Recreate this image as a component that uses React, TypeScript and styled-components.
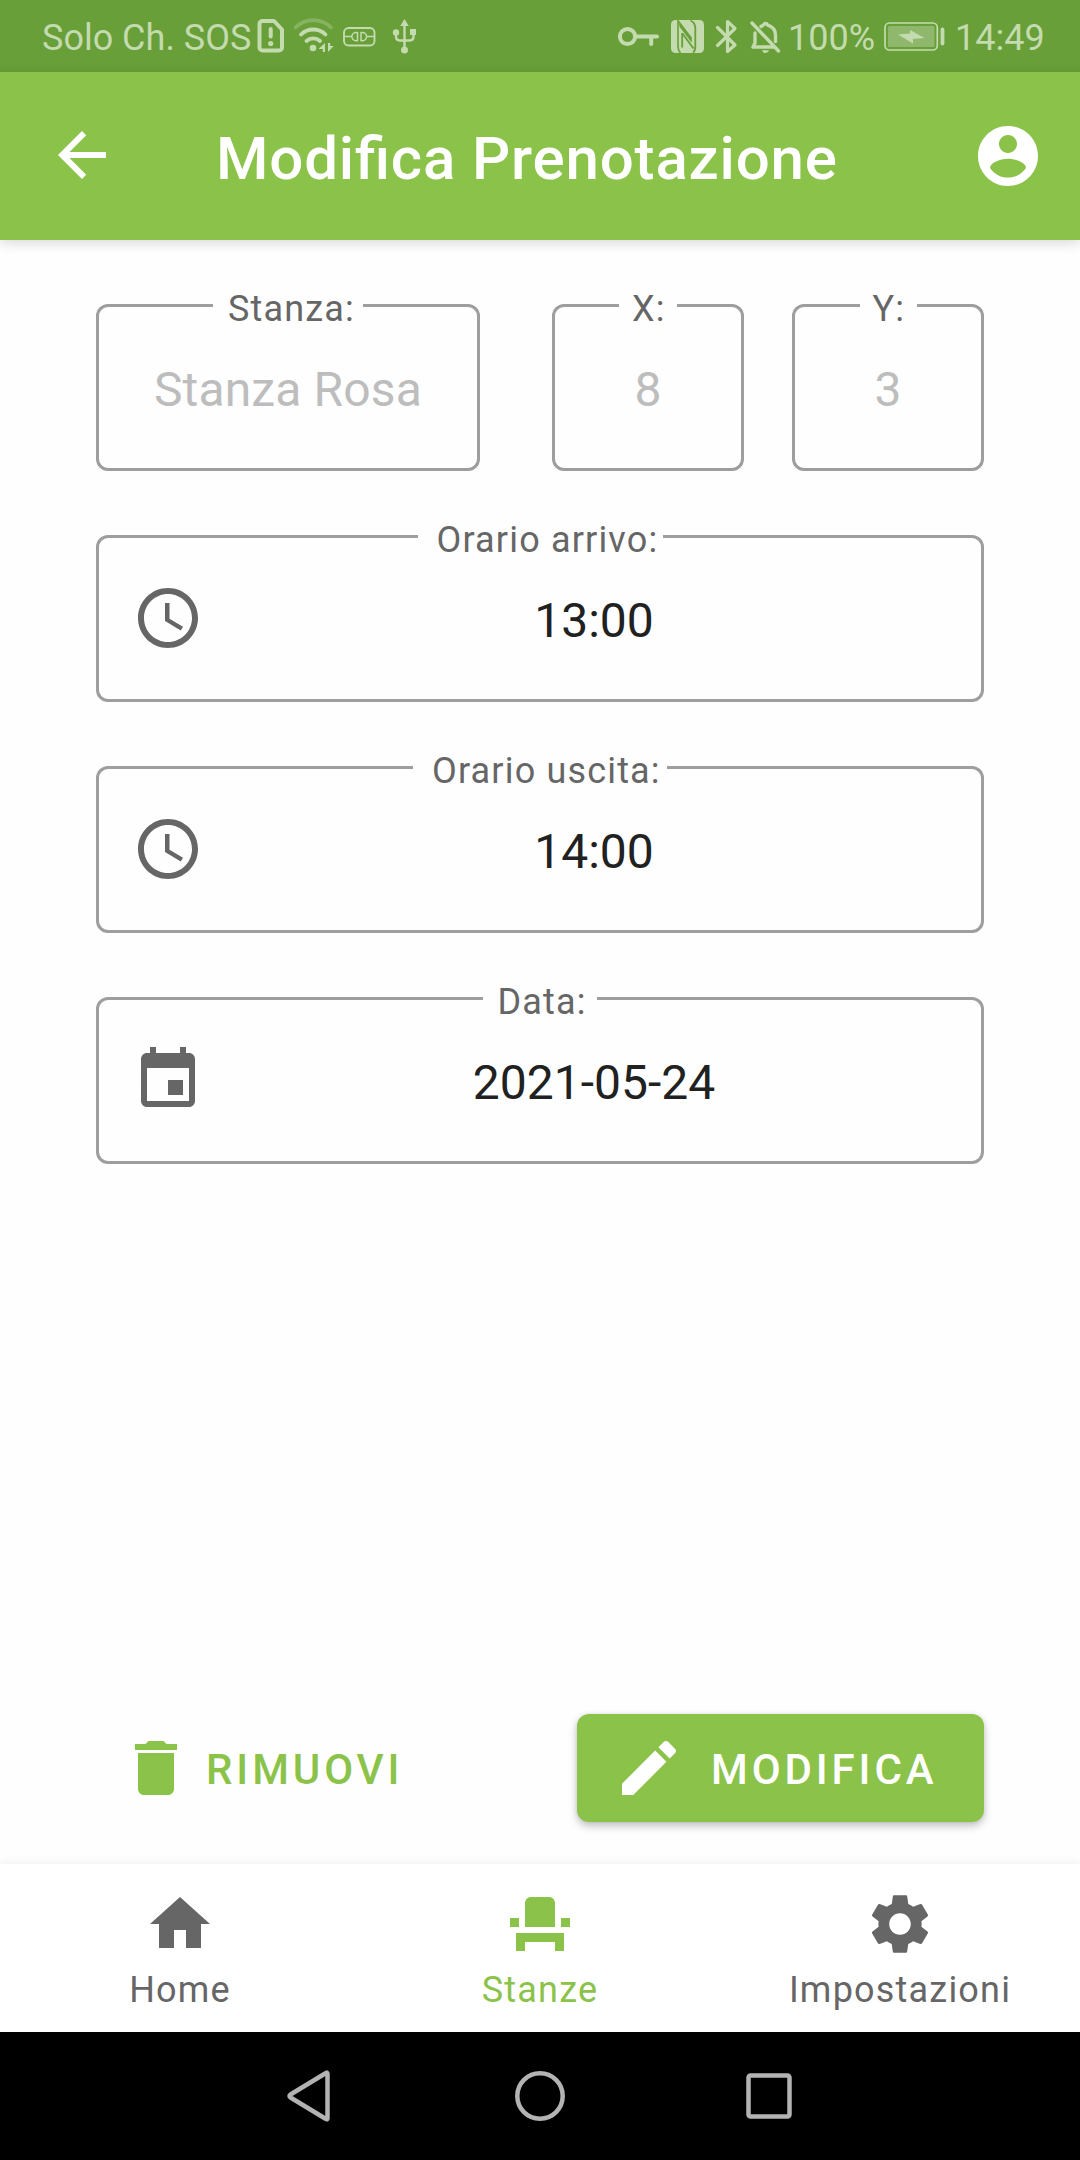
import React from "react";
import styled, { createGlobalStyle } from "styled-components";

const green = "#8bc34a";
const greenDark = "#689f38";
const grey = "#666666";
const statusInk = "#c3dbaf";

const GlobalStyle = createGlobalStyle`
  html, body { margin: 0; padding: 0; background: #fefefe; }
  *, *::before, *::after { box-sizing: border-box; }
  svg { display: block; flex: none; }
`;

const Screen = styled.div`
  width: 1080px;
  height: 2160px;
  display: flex;
  flex-direction: column;
  overflow: hidden;
  background: #fefefe;
  font-family: Roboto, "Noto Sans", sans-serif;
`;

const StatusBar = styled.div`
  display: flex;
  flex: none;
  height: 72px;
  background: ${greenDark};
  color: ${statusInk};
`;

const StatusText = styled.span<{ $width: number; $inset: number }>`
  flex: none;
  width: ${(p) => p.$width}px;
  padding-left: ${(p) => p.$inset}px;
  font-size: 36px;
  line-height: 77px;
  white-space: nowrap;
`;

const StatusSpacer = styled.div`
  flex: 1;
`;

const Header = styled.header`
  display: flex;
  flex: none;
  align-items: center;
  height: 168px;
  padding: 0 36px 0 46px;
  background: ${green};
  color: #fff;
  box-shadow: 0 3px 12px rgba(0, 0, 0, 0.15);
`;

const BackButton = styled.div`
  padding-bottom: 2px;
`;

const Title = styled.h1`
  flex: 1;
  margin: 0;
  padding: 5px 0 0 98px;
  font-size: 60px;
  line-height: 70px;
  font-weight: 500;
  letter-spacing: 0.83px;
  font-feature-settings: "liga" 1;
  white-space: nowrap;
`;

const Form = styled.main`
  display: flex;
  flex: 1;
  flex-direction: column;
  gap: 64px;
  padding: 64px 96px 0;
`;

const SeatCoordinates = styled.div`
  display: flex;
  gap: 48px;
`;

const TopRow = styled.div`
  display: flex;
  justify-content: space-between;
`;

const Field = styled.div<{ $width?: number }>`
  position: relative;
  display: flex;
  align-items: center;
  width: ${(p) => (p.$width ? `${p.$width}px` : "100%")};
  height: 167px;
  padding: 0 0 1px ${(p) => (p.$width ? 0 : 33)}px;
  border: 3px solid #9e9e9e;
  border-radius: 12px;
`;

const FieldLabel = styled.span<{ $notch: number; $inset: number }>`
  position: absolute;
  top: -18px;
  left: 50%;
  width: ${(p) => p.$notch}px;
  margin-left: ${(p) => -p.$notch / 2}px;
  padding-left: ${(p) => p.$inset}px;
  background: #fefefe;
  color: ${grey};
  font-size: 36px;
  line-height: 40px;
  letter-spacing: 1.17px;
  white-space: nowrap;
`;

const FieldValue = styled.span<{ $muted?: boolean }>`
  flex: 1;
  padding: 6px 0 0 ${(p) => (p.$muted ? 0 : 3)}px;
  color: ${(p) => (p.$muted ? "#bdbdbd" : "#212121")};
  font-size: 48px;
  line-height: 56px;
  letter-spacing: ${(p) => (p.$muted ? 0.15 : 0)}px;
  text-align: center;
  white-space: nowrap;
`;

const Actions = styled.div`
  display: flex;
  flex: none;
  justify-content: space-between;
  height: 150px;
  padding: 0 96px;
`;

const ActionButton = styled.button<{ $filled?: boolean }>`
  display: flex;
  align-items: center;
  width: ${(p) => (p.$filled ? 407 : 330)}px;
  height: 108px;
  padding: 0 0 0 ${(p) => (p.$filled ? 36 : 24)}px;
  gap: ${(p) => (p.$filled ? 26 : 14)}px;
  border: 0;
  border-radius: 12px;
  background: ${(p) => (p.$filled ? green : "transparent")};
  color: ${(p) => (p.$filled ? "#fff" : green)};
  box-shadow: ${(p) => (p.$filled ? "0 4px 8px rgba(0, 0, 0, 0.24), 0 0 4px rgba(0, 0, 0, 0.08)" : "none")};
  font-family: inherit;
  font-size: 42px;
  line-height: 50px;
  font-weight: 500;
  letter-spacing: 3.9px;
  text-transform: uppercase;
`;

const ActionLabel = styled.span`
  padding-top: 3px;
  white-space: nowrap;
`;

const BottomNav = styled.nav`
  display: grid;
  flex: none;
  grid-template-columns: repeat(3, 1fr);
  height: 168px;
  background: #fff;
  box-shadow: 0 0 10px rgba(0, 0, 0, 0.08);
`;

const NavItem = styled.div<{ $active?: boolean }>`
  display: flex;
  flex-direction: column;
  align-items: center;
  gap: 9px;
  padding-top: 24px;
  color: ${(p) => (p.$active ? green : grey)};
  font-size: 36px;
  line-height: 42px;
  letter-spacing: 1.2px;
`;

const SystemBar = styled.div`
  display: flex;
  flex: none;
  align-items: center;
  justify-content: center;
  gap: 169px;
  height: 128px;
  background: #000;
`;

const Icon = ({ d }: { d: string }) => (
  <svg width="72" height="72" viewBox="0 0 24 24" fill="currentColor">
    <path d={d} />
  </svg>
);

/* A full-height slice of the status bar; y values are bar pixels. */
const Glyph = ({ x, w, children }: { x: number; w: number; children: React.ReactNode }) => (
  <svg
    width={w}
    height="72"
    viewBox={`${x} 0 ${w} 72`}
    fill="none"
    stroke="currentColor"
    strokeLinecap="round"
    strokeLinejoin="round"
  >
    {children}
  </svg>
);

const paths = {
  back: "M20 11H7.83l5.59-5.59L12 4l-8 8 8 8 1.41-1.41L7.83 13H20v-2z",
  account:
    "M12 2C6.48 2 2 6.48 2 12s4.48 10 10 10 10-4.48 10-10S17.52 2 12 2zm0 3c1.66 0 3 1.34 3 3s-1.34 3-3 3-3-1.34-3-3 1.34-3 3-3zm0 14.2c-2.5 0-4.71-1.28-6-3.22.03-1.99 4-3.08 6-3.08 1.99 0 5.97 1.09 6 3.08-1.29 1.94-3.5 3.22-6 3.22z",
  clock:
    "M11.99 2C6.47 2 2 6.48 2 12s4.47 10 9.99 10C17.52 22 22 17.52 22 12S17.52 2 11.99 2zM12 20c-4.42 0-8-3.58-8-8s3.58-8 8-8 8 3.58 8 8-3.58 8-8 8zm.5-13H11v6l5.25 3.15.75-1.23-4.5-2.67z",
  event:
    "M17 12h-5v5h5v-5zM16 1v2H8V1H6v2H5c-1.11 0-1.99.9-1.99 2L3 19c0 1.1.89 2 2 2h14c1.1 0 2-.9 2-2V5c0-1.1-.9-2-2-2h-1V1h-2zm3 18H5V8h14v11z",
  trash: "M6 19c0 1.1.9 2 2 2h8c1.1 0 2-.9 2-2V7H6v12zM19 4h-3.5l-1-1h-5l-1 1H5v2h14V4z",
  pencil:
    "M3 17.25V21h3.75L17.81 9.94l-3.75-3.75L3 17.25zM20.71 7.04c.39-.39.39-1.02 0-1.41l-2.34-2.34c-.39-.39-1.02-.39-1.41 0l-1.83 1.83 3.75 3.75 1.83-1.83z",
  home: "M10 20v-6h4v6h5v-8h3L12 3 2 12h3v8z",
  seat: "M4 18v3h3v-3h10v3h3v-6H4v3zm15-8h3v3h-3v-3zM2 10h3v3H2v-3zm15 3H7V5c0-1.1.9-2 2-2h6c1.1 0 2 .9 2 2v8z",
  settings:
    "M19.14 12.94c.04-.3.06-.61.06-.94 0-.32-.02-.64-.07-.94l2.03-1.58c.18-.14.23-.41.12-.61l-1.92-3.32c-.12-.22-.37-.29-.59-.22l-2.39.96c-.5-.38-1.03-.7-1.62-.94l-.36-2.54c-.04-.24-.24-.41-.48-.41h-3.84c-.24 0-.43.17-.47.41l-.36 2.54c-.59.24-1.13.57-1.62.94l-2.39-.96c-.22-.08-.47 0-.59.22L2.74 8.87c-.12.21-.08.47.12.61l2.03 1.58c-.05.3-.09.63-.09.94s.02.64.07.94l-2.03 1.58c-.18.14-.23.41-.12.61l1.92 3.32c.12.22.37.29.59.22l2.39-.96c.5.38 1.03.7 1.62.94l.36 2.54c.05.24.24.41.48.41h3.84c.24 0 .44-.17.47-.41l.36-2.54c.59-.24 1.13-.56 1.62-.94l2.39.96c.22.08.47 0 .59-.22l1.92-3.32c.12-.22.07-.47-.12-.61l-2.01-1.58zM12 15.6c-1.98 0-3.6-1.62-3.6-3.6s1.62-3.6 3.6-3.6 3.6 1.62 3.6 3.6-1.62 3.6-3.6 3.6z",
};

const LeftGlyphs = () => (
  <>
    <Glyph x={256} w={32}>
      <path d="M262.5 21h11.5l8 8.5v18a3 3 0 0 1-3 3h-16.5a3 3 0 0 1-3-3V24a3 3 0 0 1 3-3z" strokeWidth="4" />
      <path d="M270.7 29v7.5" strokeWidth="4" />
      <circle cx="270.7" cy="43.5" r="2.6" fill="currentColor" stroke="none" />
    </Glyph>
    <Glyph x={288} w={50}>
      <path d="M295.5 27.5a25 25 0 0 1 35.5 0" strokeWidth="3.6" opacity="0.35" />
      <path d="M301 34.5a17.5 17.5 0 0 1 24.5 0" strokeWidth="3.8" />
      <path d="M306.5 41a10 10 0 0 1 13.5 0" strokeWidth="3.8" />
      <circle cx="313" cy="48" r="3.3" fill="currentColor" stroke="none" />
      <path d="M325 43v9h-2.2v-3h-4.3zM328 52v-9h2.2v3h3.5z" fill="currentColor" stroke="none" />
    </Glyph>
    <Glyph x={338} w={42}>
      <rect x="344" y="28" width="30.5" height="17.5" rx="4.5" strokeWidth="1.9" />
      <path d="M345 36.6h7M366.5 36.6h7M357.5 32.5h-1.5a4 4 0 0 0 0 8.2h1.5zM361 32.5h1.5a4 4 0 0 1 0 8.2H361z" strokeWidth="1.5" />
    </Glyph>
    <Glyph x={380} w={50}>
      <path d="M404.5 25v24M396 33v3.5q0 4 4 4h9.5q4 0 4-4V33" strokeWidth="2.4" />
      <path d="M404.5 19l4.3 7h-8.6zM410 29h6v6h-6z" fill="currentColor" stroke="none" />
      <circle cx="396" cy="32.5" r="3.2" fill="currentColor" stroke="none" />
      <circle cx="404.5" cy="50" r="3.5" fill="currentColor" stroke="none" />
    </Glyph>
  </>
);

const RightGlyphs = () => (
  <>
    <Glyph x={612} w={53}>
      <circle cx="627.5" cy="36.5" r="7.6" strokeWidth="4" />
      <path d="M636 36.5h21M651.2 37v7" strokeWidth="4" />
    </Glyph>
    <Glyph x={665} w={45}>
      <rect x="671" y="20" width="33" height="33" rx="4.5" fill="currentColor" stroke="none" />
      <g stroke={greenDark} strokeLinecap="butt">
        <path d="M678 20v26q0 4.5 2.5 7" strokeWidth="1.6" />
        <path d="M678.5 20.5L691.5 37.5V42L680 27z" fill={greenDark} strokeWidth="0.6" />
        <path d="M682.2 33v14.5M682.5 33.5l11 15" strokeWidth="1.8" />
        <path d="M690.5 20.5q4.8 2 4.8 8V47q0 4-2.3 5.5" strokeWidth="1.8" />
      </g>
    </Glyph>
    <Glyph x={710} w={32}>
      <path d="M717.5 27.5L735 45l-7.5 6.5v-30L735 28.5 717.5 45.5" strokeWidth="3.2" />
    </Glyph>
    <Glyph x={742} w={44}>
      <path d="M752 23l26.5 28" strokeWidth="3.4" />
      <path d="M755 33v10l-2 4h20.5M761 26.5q2-1.3 2.8-1.7a1.9 1.9 0 0 1 3.6 0q8.1 2.7 8.1 10.2v6.5" strokeWidth="3.4" />
      <path d="M762 50.3h7q-.8 2.8-3.5 2.8t-3.5-2.8z" fill="currentColor" stroke="none" />
    </Glyph>
  </>
);

const Battery = () => (
  <Glyph x={878} w={72}>
    <rect x="885" y="23" width="52.3" height="27" rx="4.5" strokeWidth="1.7" />
    <rect x="888" y="26" width="46.5" height="21" rx="1.5" fill="#90b86d" stroke="none" />
    <path d="M898 34.5l12-1V30l14.5 8-11.5 1v4.5z" fill="currentColor" stroke="none" />
    <path d="M942.5 29.5v14" strokeWidth="3.8" />
  </Glyph>
);

interface FieldProps {
  label: string;
  value: string;
  notch: number;
  inset: number;
  icon?: string;
  width?: number;
}

const OutlinedField = ({ label, value, notch, inset, icon, width }: FieldProps) => (
  <Field $width={width}>
    <FieldLabel $notch={notch} $inset={inset}>{label}</FieldLabel>
    {icon && (
      <svg width="72" height="72" viewBox="0 0 24 24" fill={grey}>
        <path d={icon} />
      </svg>
    )}
    <FieldValue $muted={!icon}>{value}</FieldValue>
  </Field>
);

export default function App() {
  return (
    <>
      <GlobalStyle />
      <Screen>
        <StatusBar>
          <StatusText $width={256} $inset={42}>Solo Ch. SOS</StatusText>
          <LeftGlyphs />
          <StatusSpacer />
          <RightGlyphs />
          <StatusText $width={92} $inset={2}>100%</StatusText>
          <Battery />
          <StatusText $width={130} $inset={5}>14:49</StatusText>
        </StatusBar>

        <Header>
          <BackButton><Icon d={paths.back} /></BackButton>
          <Title>Modifica Prenotazione</Title>
          <Icon d={paths.account} />
        </Header>

        <Form>
          <TopRow>
            <OutlinedField label="Stanza:" value="Stanza Rosa" notch={150} inset={15} width={384} />
            <SeatCoordinates>
              <OutlinedField label="X:" value="8" notch={58} inset={13} width={192} />
              <OutlinedField label="Y:" value="3" notch={57} inset={13} width={192} />
            </SeatCoordinates>
          </TopRow>
          <OutlinedField label="Orario arrivo:" value="13:00" notch={245} inset={19} icon={paths.clock} />
          <OutlinedField label="Orario uscita:" value="14:00" notch={254} inset={19} icon={paths.clock} />
          <OutlinedField label="Data:" value="2021-05-24" notch={114} inset={14.5} icon={paths.event} />
        </Form>

        <Actions>
          <ActionButton>
            <Icon d={paths.trash} />
            <ActionLabel>Rimuovi</ActionLabel>
          </ActionButton>
          <ActionButton $filled>
            <Icon d={paths.pencil} />
            <ActionLabel>Modifica</ActionLabel>
          </ActionButton>
        </Actions>

        <BottomNav>
          <NavItem><Icon d={paths.home} />Home</NavItem>
          <NavItem $active><Icon d={paths.seat} />Stanze</NavItem>
          <NavItem><Icon d={paths.settings} />Impostazioni</NavItem>
        </BottomNav>

        <SystemBar>
          <svg width="60" height="60" viewBox="0 0 60 60" fill="none" stroke="#b3b3b3" strokeWidth="4.5" strokeLinejoin="round">
            <path d="M46.5 7.7v44.6Q46.5 54 45 53L9.5 31.5Q7.5 30 9.5 28.5L45 7Q46.5 6 46.5 7.7z" />
          </svg>
          <svg width="60" height="60" viewBox="0 0 60 60" fill="none" stroke="#b3b3b3" strokeWidth="4.5">
            <circle cx="30" cy="30" r="22.7" />
          </svg>
          <svg width="60" height="60" viewBox="0 0 60 60" fill="none" stroke="#b3b3b3" strokeWidth="4.5">
            <rect x="9.5" y="9.5" width="41" height="41" rx="2" />
          </svg>
        </SystemBar>
      </Screen>
    </>
  );
}
